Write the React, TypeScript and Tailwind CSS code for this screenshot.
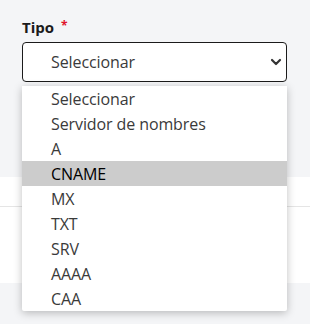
import React from 'react';

const options = ['Seleccionar', 'Servidor de nombres', 'A', 'CNAME', 'MX', 'TXT', 'SRV', 'AAAA', 'CAA'];

const App: React.FC = () => {
  return (
    <div className="relative w-[310px] h-[333px] overflow-hidden bg-white font-['Open_Sans',sans-serif]">
      {/* Form section */}
      <div className="h-[177px] bg-[#f4f5f7] px-[22px] pt-[17px]">
        <div className="flex items-start gap-[7px] h-[25px]">
          <span className="text-[15px] font-bold text-[#1b1b1b] leading-[20px]">Tipo</span>
          <span className="text-[12px] font-bold text-[#e0142c] leading-[14px] mt-[2px]">*</span>
        </div>
        <div className="flex items-center justify-between h-[40px] w-[265px] bg-white border border-[#1b1b1b] rounded-[4px] pl-[28px] pr-[4px]">
          <span className="text-[16px] text-[#3a3a3a] tracking-[-0.1px]">Seleccionar</span>
          <svg width="12" height="8" viewBox="0 0 12 8" className="text-[#333]">
            <path d="M2 2l4 4 4-4" fill="none" stroke="currentColor" strokeWidth="2.2" strokeLinecap="round" strokeLinejoin="round" />
          </svg>
        </div>
      </div>

      {/* Content behind */}
      <div className="h-[30px] bg-white border-b border-[#e5e5e5]" />
      <div className="h-[76px] bg-white" />
      <div className="h-[41px] bg-[#f4f5f7]" />

      {/* Dropdown list */}
      <ul className="absolute left-[22px] top-[86px] w-[265px] bg-white rounded-b-[2px] shadow-[0_2px_8px_rgba(0,0,0,0.25)]">
        {options.map((opt) => (
          <li
            key={opt}
            className={`h-[25px] pl-[29px] flex items-center text-[16px] tracking-[-0.1px] ${
              opt === 'CNAME' ? 'bg-[#cccccc] text-black' : 'text-[#3a3a3a]'
            }`}
          >
            {opt}
          </li>
        ))}
      </ul>
    </div>
  );
};

export default App;
